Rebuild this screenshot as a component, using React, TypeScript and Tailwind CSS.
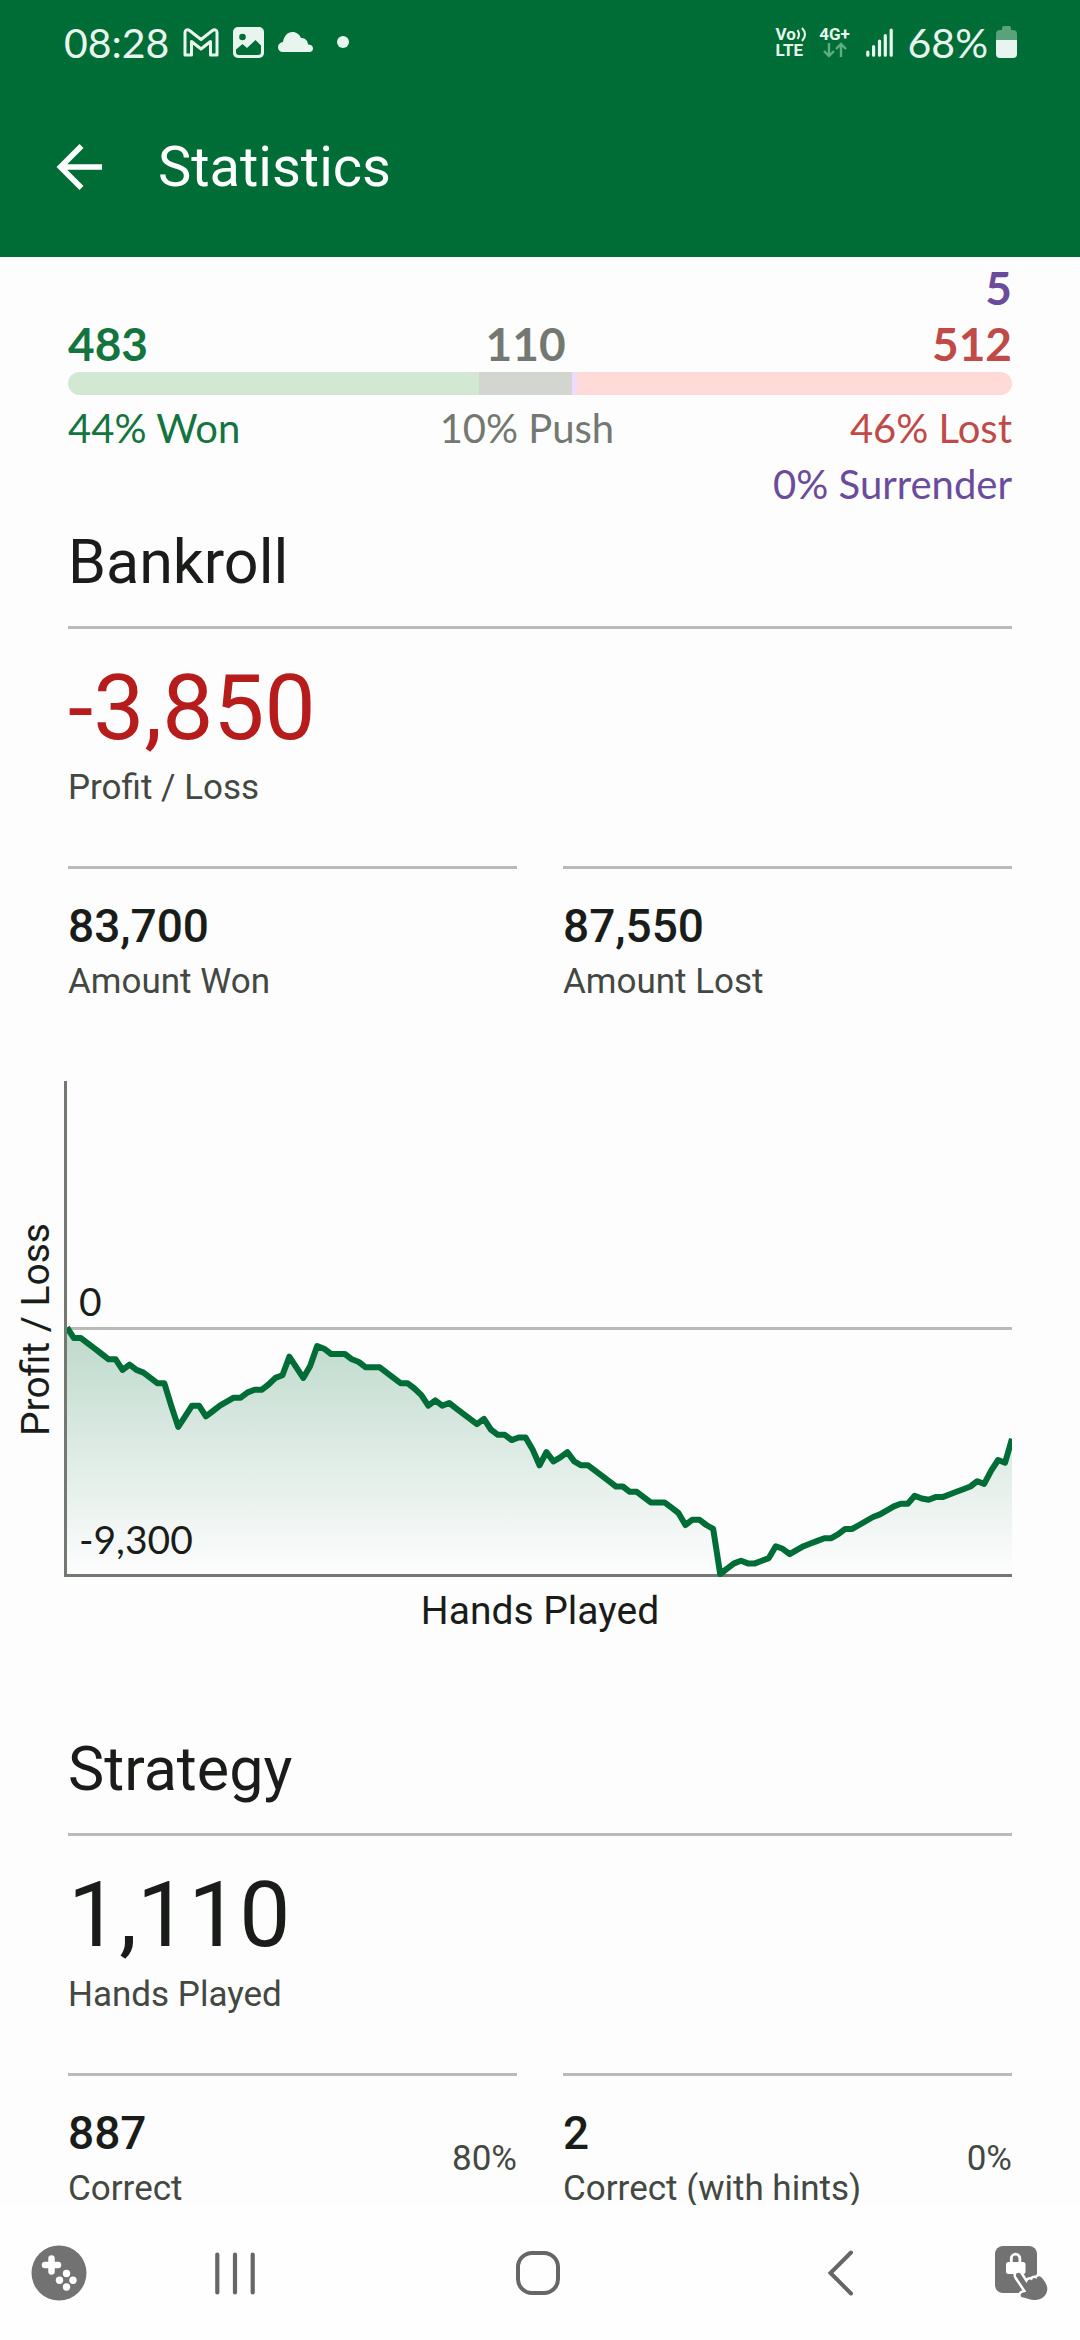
const won = 483;
const push = 110;
const surrender = 5;
const lost = 512;

// running profit, one sample every few hands
const profit = [
  0, -400, -400, -600, -800, -1000, -1200, -1200, -1600, -1400, -1600, -1700,
  -1900, -2100, -2100, -2950, -3750, -3350, -2950, -2950, -3350, -3150, -2950,
  -2800, -2650, -2650, -2450, -2350, -2350, -2150, -1900, -1800, -1100, -1500,
  -1900, -1450, -700, -800, -1000, -1000, -1000, -1200, -1300, -1500, -1500,
  -1500, -1700, -1900, -2100, -2100, -2300, -2550, -2950, -2750, -2950, -2850,
  -3050, -3250, -3450, -3650, -3450, -3850, -4050, -4050, -4250, -4150, -4150,
  -4600, -5200, -4700, -5050, -4900, -4700, -5050, -5200, -5200, -5400, -5600,
  -5800, -6000, -6000, -6200, -6200, -6400, -6600, -6600, -6600, -6800, -7000,
  -7450, -7250, -7250, -7450, -7600, -9300, -9100, -8900, -8800, -8900, -8900,
  -8800, -8700, -8250, -8350, -8550, -8400, -8250, -8150, -8050, -7950, -7950,
  -7800, -7600, -7600, -7450, -7300, -7150, -7050, -6900, -6750, -6650, -6650,
  -6350, -6450, -6500, -6400, -6400, -6300, -6200, -6100, -6000, -5800, -5900,
  -5400, -5000, -5100, -4200,
];

const MAX = 9300;
const W = 944;
const H = 493;

const points = profit
  .map((p, i) => {
    const x = (i * W) / (profit.length - 1);
    const y = H / 2 - (p / MAX) * (H / 2);
    return `${x.toFixed(1)},${y.toFixed(1)}`;
  })
  .join(" ");

function StatusBar() {
  return (
    <div className="flex h-[84px] items-center justify-between pl-[64px] pr-[63px] text-[41px] leading-none text-[#e8f5ee] [font-family:Lato,sans-serif]">
      <div className="flex items-center">
        <span>08:28</span>
        <svg className="ml-[14px] h-[29px] w-[36px]" viewBox="0 0 36 29" fill="none" stroke="currentColor" strokeWidth="3" strokeLinejoin="round">
          <path d="M2 4.5C2 1.5 4.500 1 6.500 2.500L18 11.500L29.500 2.500C31.500 1 34 1.500 34 4.500V27H27.500V13.500L18 21L8.500 13.500V27H2Z" />
        </svg>
        <svg className="ml-[14px] h-[31px] w-[31px]" viewBox="0 0 31 31">
          <rect width="31" height="31" rx="5" fill="currentColor" />
          <circle cx="9.500" cy="10" r="3.300" fill="#006d36" />
          <path d="M3 22.500L9.500 17L14 21L22.500 13L28 18.500V25Q28 28 25 28H6Q3 28 3 25Z" fill="#006d36" />
        </svg>
        <svg className="ml-[14px] h-[20px] w-[35px]" viewBox="0 0 35 20" fill="currentColor">
          <path d="M5 20A5 5 0 0 1 0 15.500C0 12 2.500 10.500 5 10C6 4 9.500 0 14.500 0C18.500 0 21.500 2.500 23 6C27 5.500 30 9 30 12.500C33 12.500 35 14 35 16.500C35 18.500 33.500 20 31.500 20Z" />
        </svg>
        <span className="ml-6 size-3 rounded-full bg-current" />
      </div>

      <div className="flex items-center">
        <div className="mr-[10px] w-[32px] text-[17px] font-bold leading-4 [font-family:Roboto,sans-serif]">
          <div className="flex items-center">
            Vo
            <svg className="h-[15px] w-[11px] shrink-0" viewBox="0 0 11 15" fill="none" stroke="currentColor" strokeWidth="2">
              <path d="M1.500 3Q4.500 7.500 1.500 12M6 1Q12 7.500 6 14" />
            </svg>
          </div>
          <div>LTE</div>
        </div>
        <div className="mr-[14px] flex w-[34px] flex-col items-center text-[17px] font-bold leading-4 [font-family:Roboto,sans-serif]">
          4G+
          <svg className="h-4 w-6" viewBox="0 0 24 16" fill="none" stroke="#5fae84" strokeWidth="2.400">
            <path d="M6 1V14M1 9L6 14L11 9M18 15V2M13 7L18 2L23 7" />
          </svg>
        </div>
        <svg className="mr-[15px] h-[29px] w-[27px]" viewBox="0 0 27 29" stroke="currentColor" strokeWidth="3.200" strokeLinecap="round">
          <path d="M1.800 24V27.200M7.600 18.500V27.200M13.500 13V27.200M19.300 7.500V27.200M25.200 2V27.200" />
        </svg>
        <span>68%</span>
        <svg className="ml-2 h-[32px] w-[21px]" viewBox="0 0 21 32">
          <path d="M6 2Q6 0 8 0H13Q15 0 15 2V4H17Q21 4 21 8V15H0V8Q0 4 4 4H6Z" fill="#5aa27c" />
          <path d="M0 14H21V28Q21 32 17 32H4Q0 32 0 28Z" fill="currentColor" />
        </svg>
      </div>
    </div>
  );
}

function Section({ title, value, label, red = false, children }) {
  return (
    <section className="px-[68px]">
      <h2 className="text-[61px] leading-[80px]">{title}</h2>
      <div className="mt-6 border-t-[3px] border-[#b8bbb6] pt-[25px]">
        <p className={`text-[91px] leading-[108px] ${red ? "text-[#b71c1c]" : ""}`}>{value}</p>
        <p className="text-[35px] leading-[52px] text-[#434842]">{label}</p>
      </div>
      <div className="mt-[52px] grid grid-cols-2 gap-[46px]">{children}</div>
    </section>
  );
}

function Stat({ value, label, percent = "" }) {
  return (
    <div className="flex items-center justify-between border-t-[3px] border-[#b8bbb6] pt-[27px]">
      <div>
        <p className="text-[46px] font-medium leading-[60px]">{value}</p>
        <p className="text-[35px] leading-[52px] text-[#434842]">{label}</p>
      </div>
      {percent && <p className="text-[35px] leading-[52px] text-[#434842]">{percent}</p>}
    </div>
  );
}

function Results() {
  return (
    <section className="px-[68px] text-[40px] leading-[56px] [font-family:Lato,sans-serif]">
      <div className="grid grid-cols-[483fr_110fr_517fr] items-end text-[46px] font-bold">
        <p className="text-[#14743f]">{won}</p>
        <p className="flex justify-center text-[#747872]">{push}</p>
        <div className="text-right">
          <p className="text-[#6b4b9b]">{surrender}</p>
          <p className="text-[#c04a48]">{lost}</p>
        </div>
      </div>
      <div className="flex h-[23px] overflow-hidden rounded-full">
        <div className="bg-[#d2e8d3]" style={{ flexGrow: won }} />
        <div className="bg-[#d3d5d1]" style={{ flexGrow: push }} />
        <div className="bg-[#eedcff]" style={{ flexGrow: surrender }} />
        <div className="bg-[#ffdad6]" style={{ flexGrow: lost }} />
      </div>
      <div className="mt-[5px] grid grid-cols-[483fr_110fr_517fr]">
        <p className="text-[#14743f]">44% Won</p>
        <p className="flex justify-center whitespace-nowrap text-[#747872]">10% Push</p>
        <div className="text-right">
          <p className="text-[#c04a48]">46% Lost</p>
          <p className="text-[#6b4b9b]">0% Surrender</p>
        </div>
      </div>
    </section>
  );
}

function ProfitChart() {
  return (
    <figure className="mt-[73px] text-[39px] leading-[48px]">
      <div className="grid grid-cols-[64px_1fr] pr-[68px]">
        <div className="flex items-center pl-3">
          <span className="rotate-180 whitespace-nowrap [writing-mode:vertical-rl]">Profit / Loss</span>
        </div>
        <div className="border-l-[3px] border-[#747872]">
          <div className="relative flex h-[496px] flex-col border-b-[3px] border-[#747872] [font-family:Lato,sans-serif]">
            <div className="flex h-[249px] items-end border-b-[3px] border-[#b8bbb6] pb-0.5 pl-3">0</div>
            <svg className="absolute inset-0 h-[496px] w-full" viewBox="0 0 944 496" preserveAspectRatio="none">
              <defs>
                <linearGradient id="area" gradientUnits="userSpaceOnUse" x1="0" y1="247" x2="0" y2="493">
                  <stop offset="0" stopColor="#006d36" stopOpacity="0.25" />
                  <stop offset="1" stopColor="#006d36" stopOpacity="0" />
                </linearGradient>
              </defs>
              <polygon points={`0,247 ${points} ${W},${H} 0,${H}`} fill="url(#area)" />
              <polyline points={points} fill="none" stroke="#006d36" strokeWidth="6" strokeLinejoin="round" />
            </svg>
            <div className="relative flex flex-1 items-end pb-[11px] pl-3">-9,300</div>
          </div>
        </div>
      </div>
      <figcaption className="mt-[10px] text-center">Hands Played</figcaption>
    </figure>
  );
}

function NavBar() {
  return (
    <nav className="flex h-[135px] shrink-0 items-center bg-[#fefefe] text-[#666]">
      <button aria-label="Game tools" className="w-[84px] shrink-0 pl-[31px]">
        <svg className="h-[56px] w-[56px]" viewBox="0 0 56 56">
          <circle cx="28" cy="28" r="27.500" fill="#727272" />
          <path d="M20.500 13.500V26.500M14 20H27" stroke="#fff" strokeWidth="6.500" strokeLinecap="round" />
          <g fill="#fff">
            <circle cx="35.500" cy="28.500" r="3.700" />
            <circle cx="28.500" cy="35.300" r="3.700" />
            <circle cx="42" cy="35.300" r="3.700" />
            <circle cx="35.500" cy="42" r="3.700" />
          </g>
        </svg>
      </button>
      <div className="flex flex-1 items-center">
        <button aria-label="Recent apps" className="flex flex-1 justify-center">
          <svg className="h-[44px] w-[44px]" viewBox="0 0 44 44" stroke="currentColor" strokeWidth="4.200" strokeLinecap="round">
            <path d="M4.300 3.500V41.500M22 3.500V41.500M39.700 3.500V41.500" />
          </svg>
        </button>
        <button aria-label="Home" className="flex flex-1 justify-center">
          <svg className="h-[46px] w-[46px]" viewBox="0 0 46 46" fill="none" stroke="currentColor" strokeWidth="4">
            <rect x="3" y="3" width="40" height="40" rx="14" />
          </svg>
        </button>
        <button aria-label="Back" className="flex flex-1 justify-center">
          <svg className="h-[46px] w-[27px]" viewBox="0 0 27 46" fill="none" stroke="currentColor" strokeWidth="4" strokeLinecap="round">
            <path d="M24 2.500L3.500 23L24 43.500" />
          </svg>
        </button>
      </div>
      <button aria-label="Lock screen touches" className="w-[88px] shrink-0 pl-[3px]">
        <svg className="h-[54px] w-[53px]" viewBox="0 0 53 54">
          <rect width="42" height="47" rx="8" fill="#727272" />
          <rect x="11" y="16" width="19.500" height="12" rx="2.500" fill="#fff" />
          <path d="M16.300 17V12.500A4.300 4.300 0 0 1 24.900 12.500V17" fill="none" stroke="#fff" strokeWidth="2.800" />
          <path
            d="M21.500 27.500C23 26.200 24.800 26.500 25.800 28.200L31.500 37L32.800 34.500C34 33 36 33 37 34.500C37.300 31.800 40 31.300 41.500 33C41.800 30 44.500 29.300 46.500 31.500C50 35 52.500 39.500 52.300 43.500C51.800 50 46 54 40 54C35 54 30.500 51.500 26.800 51.200C25 50.500 25.300 47.500 27.500 46.800C29 46.200 30.500 46.500 31.200 45.500L21.500 31C20.700 29.700 20.700 28.500 21.500 27.500Z"
            fill="#727272"
            stroke="#fff"
            strokeWidth="5"
            strokeLinejoin="round"
            paintOrder="stroke"
          />
        </svg>
      </button>
    </nav>
  );
}

export default function App() {
  return (
    <div className="flex h-screen flex-col bg-[#fdfdfd] text-[#1a1c1a] [font-family:Roboto,sans-serif]">
      <header className="shrink-0 bg-[#006d36] pb-2 text-white">
        <StatusBar />
        <div className="flex h-[165px] items-center pl-[56px]">
          <button aria-label="Back">
            <svg className="h-[46px] w-[46px]" viewBox="0 0 46 46" fill="none" stroke="currentColor" strokeWidth="5.600">
              <path d="M25.500 2L4.500 23L25.500 44M5 23H46" />
            </svg>
          </button>
          <h1 className="ml-[56px] text-[56px] leading-[68px]">Statistics</h1>
        </div>
      </header>

      <main className="min-h-0 flex-1 overflow-y-auto pt-[3px] [scrollbar-width:none]">
        <Results />

        <div className="mt-[10px]">
          <Section title="Bankroll" value="-3,850" label="Profit / Loss" red>
            <Stat value="83,700" label="Amount Won" />
            <Stat value="87,550" label="Amount Lost" />
          </Section>
        </div>

        <ProfitChart />

        <div className="mt-[94px]">
          <Section title="Strategy" value="1,110" label="Hands Played">
            <Stat value="887" label="Correct" percent="80%" />
            <Stat value="2" label="Correct (with hints)" percent="0%" />
          </Section>
        </div>
      </main>

      <NavBar />
    </div>
  );
}
